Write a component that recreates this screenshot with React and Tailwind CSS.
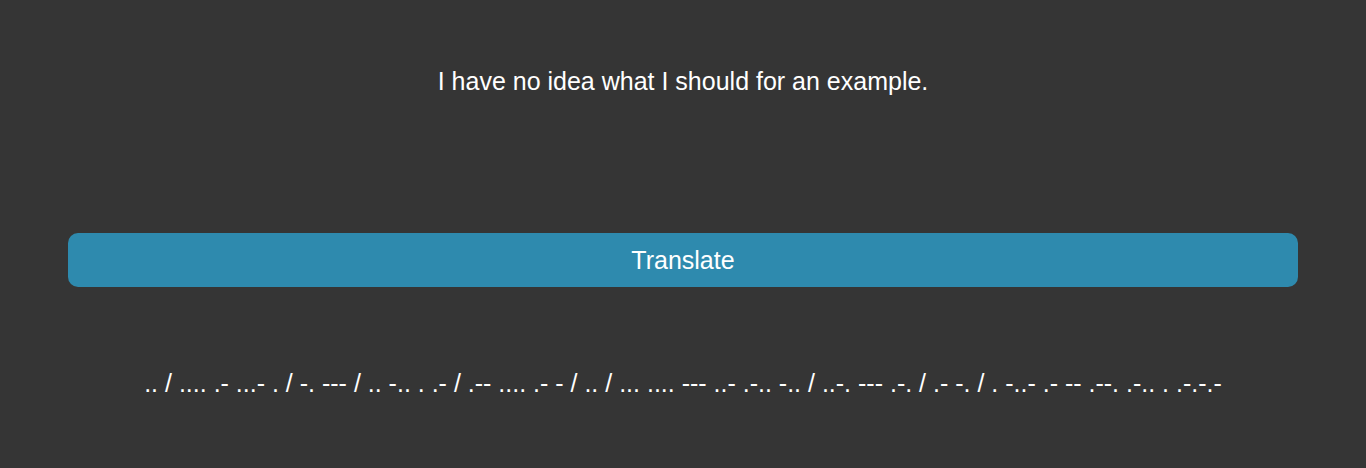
export default function App() {
  const morse =
    ".. / .... .- ...- . / -. --- / .. -.. . .- / .-- .... .- - / .. / ... .... --- ..- .-.. -.. / ..-. --- .-. / .- -. / . -..- .- -- .--. .-.. . .-.-.-";

  return (
    <div className="min-h-screen w-full bg-[#353535] flex flex-col items-center text-white font-['Liberation_Sans',Arial,sans-serif]">
      <p className="mt-[67px] text-[25px] leading-[29px]">
        I have no idea what I should for an example.
      </p>
      <button className="mt-[137px] w-[1230px] h-[54px] pt-[2px] rounded-[10px] bg-[#2e8aae] text-[25px] text-white">
        Translate
      </button>
      <p className="mt-[82px] text-[25px] leading-[29px]">{morse}</p>
    </div>
  );
}
